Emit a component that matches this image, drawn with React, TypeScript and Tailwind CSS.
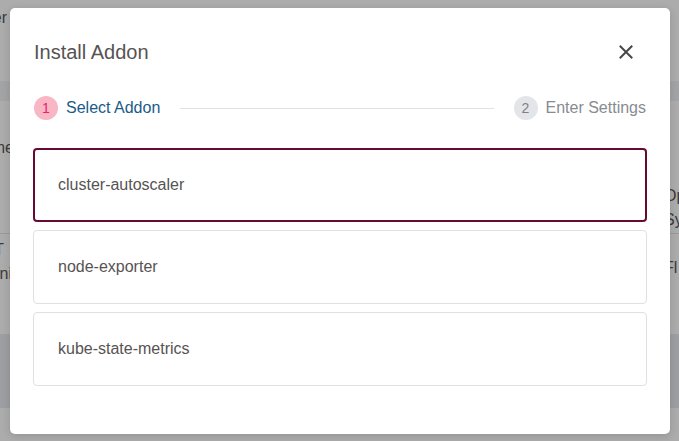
import { useState } from 'react';

const addons = ['cluster-autoscaler', 'node-exporter', 'kube-state-metrics'];

type BgText = { t: string; cls?: string };

function BgRow({ h, left, right, leftPt, rightPt }: { h: string; left: BgText[]; right: BgText[]; leftPt: string; rightPt: string }) {
  return (
    <div className={`flex justify-between overflow-hidden ${h}`}>
      <div className={`w-[14px] overflow-hidden flex flex-col items-end text-[16px] leading-6 text-[#3b3b3b] ${leftPt}`}>
        {left.map((x, i) => (
          <div key={i} className={`whitespace-nowrap ${x.cls ?? ''}`}>{x.t}</div>
        ))}
      </div>
      <div className={`w-[15px] overflow-hidden flex flex-col items-start text-[16px] leading-6 text-[#3b3b3b] ${rightPt}`}>
        {right.map((x, i) => (
          <div key={i} className={`whitespace-nowrap ${x.cls ?? ''}`}>{x.t}</div>
        ))}
      </div>
    </div>
  );
}

export default function App() {
  const [selected, setSelected] = useState('cluster-autoscaler');

  return (
    <div className="relative w-[679px] h-[441px] overflow-hidden bg-[#acacac] font-['Liberation_Sans',Arial,sans-serif]">
      {/* dimmed page behind the dialog */}
      <div className="flex flex-col">
        <div className="h-[81px] flex justify-between">
          <div className="w-[7px] overflow-hidden flex justify-end pt-[6px] text-[16px] leading-6 text-[#3b3b3b]">
            <span className="whitespace-nowrap">Cluster</span>
          </div>
        </div>
        <div className="h-[20px] bg-[#a3a4a6]" />
        <BgRow h="h-[132px]" left={[{ t: 'Name' }]} right={[{ t: 'Op' }, { t: 'Sy' }]} leftPt="pt-[35px]" rightPt="pt-[83px]" />
        <div className="h-px bg-[#9a9a9a]" />
        <BgRow
          h="h-[100px]"
          left={[{ t: 'AT', cls: 'mr-[10px]' }, { t: 'Mini', cls: 'mr-[2px]' }]}
          right={[{ t: 'Fl' }]}
          leftPt="pt-[4px]"
          rightPt="pt-[22px]"
        />
        <div className="h-[74px] bg-[#9e9fa2]" />
      </div>

      {/* dialog */}
      <div className="absolute left-[10px] top-[8px] w-[660px] h-[426px] bg-white rounded-[5px] shadow-[0_2px_8px_rgba(0,0,0,0.15)] flex flex-col">
        <div className="flex items-center justify-between pl-6 pr-[32px] pt-[30px]">
          <h2 className="text-[20px] leading-7 text-[#575353]">Install Addon</h2>
          <button className="w-6 h-6 flex items-center justify-center">
            <svg width="14" height="14" viewBox="0 0 14 14" fill="none" stroke="#4a4646" strokeWidth="2" strokeLinecap="square">
              <path d="M1.5 1.5 L12.5 12.5 M12.5 1.5 L1.5 12.5" />
            </svg>
          </button>
        </div>

        <div className="flex items-center px-6 mt-[30px] h-6">
          <div className="w-6 h-6 rounded-full bg-[#f9b6c4] flex items-center justify-center text-[14px] text-[#e52469]">1</div>
          <span className="ml-2 text-[16px] text-[#1b5b88]">Select Addon</span>
          <div className="flex-1 mx-5 h-px bg-[#e1e1e1]" />
          <div className="w-6 h-6 rounded-full bg-[#e3e5e8] flex items-center justify-center text-[14px] text-[#7c8088]">2</div>
          <span className="ml-2 text-[16px] text-[#878b92]">Enter Settings</span>
        </div>

        <div className="flex flex-col gap-2 mt-7 mx-[23px]">
          {addons.map(a => (
            <button
              key={a}
              onClick={() => setSelected(a)}
              className={
                a === selected
                  ? 'h-[74px] flex items-center text-left rounded-[4px] border-2 border-[#680a35] pl-[23px] text-[16px] text-[#575353]'
                  : 'h-[74px] flex items-center text-left rounded-[4px] border border-[#e0e0e2] pl-[24px] text-[16px] text-[#575353]'
              }
            >
              {a}
            </button>
          ))}
        </div>
      </div>
    </div>
  );
}
